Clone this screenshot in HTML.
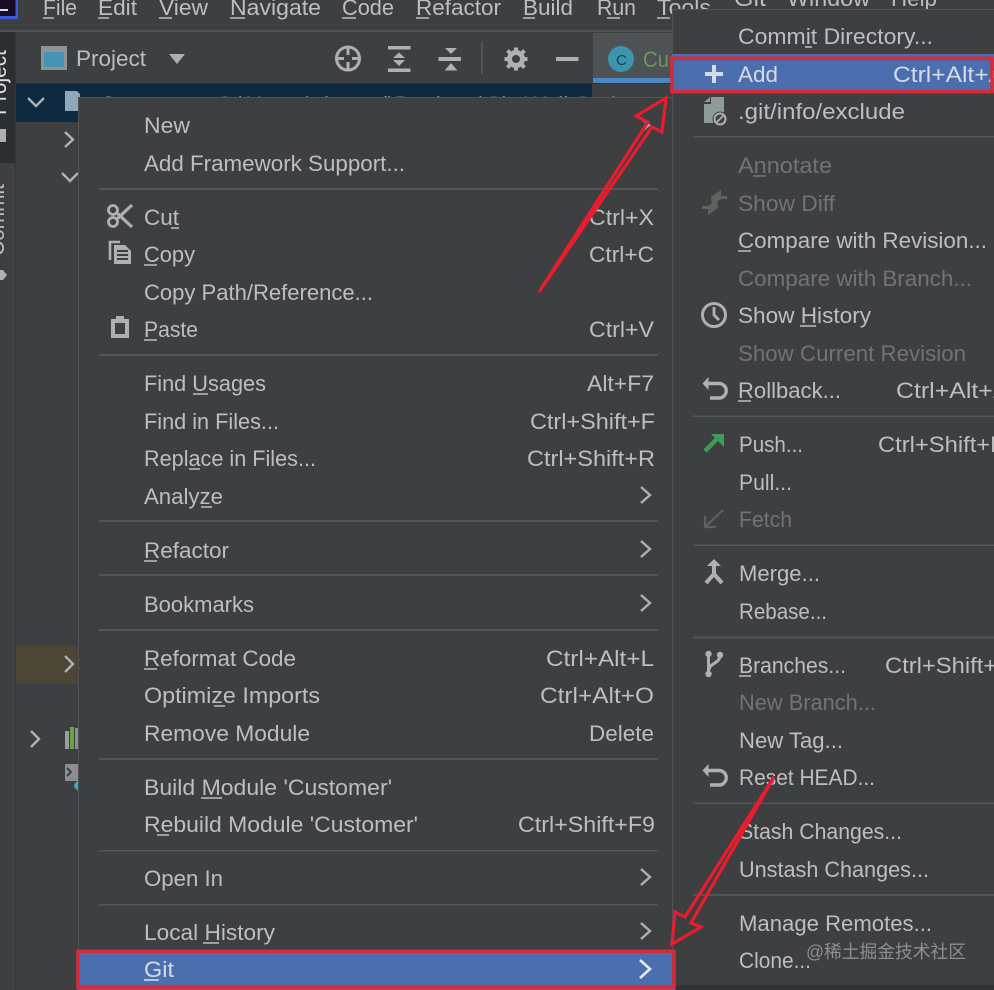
<!DOCTYPE html>
<html><head><meta charset="utf-8"><title>Git menu</title>
<style>
html,body{margin:0;padding:0;background:#3e3f41;width:994px;height:990px;overflow:hidden}
svg{display:block;filter:blur(.3px)}
text{font-family:"Liberation Sans","Noto Sans CJK SC",sans-serif;font-size:22px;fill:#bcbec0}
.d{fill:#717375}
.w{fill:#d6dbe4}
.u{stroke:#bcbec0;stroke-width:1.6}
.sep{fill:#545658}
.ic{fill:#aeb0b2}
.st{fill:none;stroke:#aeb0b2;stroke-width:3}
.ch{fill:none;stroke:#aeb0b2;stroke-width:2.4}
</style></head><body>
<svg width="994" height="990" viewBox="0 0 994 990" xmlns="http://www.w3.org/2000/svg">
<rect width="994" height="990" fill="#3e3f41"/>
<!-- top -->
<rect x="0" y="0" width="18" height="19" fill="#3a5be0"/>
<rect x="0" y="0" width="15.500" height="16" fill="#1a0b26"/>
<rect x="0" y="9" width="8" height="2" fill="#ddd"/>
<rect x="0" y="30" width="994" height="2" fill="#505254"/>
<g>
<text x="43" y="15" textLength="34" lengthAdjust="spacingAndGlyphs">File</text>
<text x="98" y="15" textLength="39" lengthAdjust="spacingAndGlyphs">Edit</text>
<text x="159" y="15" textLength="49" lengthAdjust="spacingAndGlyphs">View</text>
<text x="230" y="15" textLength="91" lengthAdjust="spacingAndGlyphs">Navigate</text>
<text x="342" y="15" textLength="52" lengthAdjust="spacingAndGlyphs">Code</text>
<text x="416" y="15" textLength="85" lengthAdjust="spacingAndGlyphs">Refactor</text>
<text x="523" y="15" textLength="50" lengthAdjust="spacingAndGlyphs">Build</text>
<text x="597" y="15" textLength="39" lengthAdjust="spacingAndGlyphs">Run</text>
<text x="657" y="15" textLength="54" lengthAdjust="spacingAndGlyphs">Tools</text>
<text x="734" y="6" textLength="32" lengthAdjust="spacingAndGlyphs">Git</text>
<text x="787" y="6" textLength="83" lengthAdjust="spacingAndGlyphs">Window</text>
<text x="891" y="6" textLength="46" lengthAdjust="spacingAndGlyphs">Help</text>
<path class="u" d="M43 18h11M98 18h11M159 18h13M230 18h15M342 18h14M416 18h13M523 18h12M607 18h13M657 18h13"/>
</g>
<!-- left strip -->
<rect x="0" y="32" width="16" height="958" fill="#3e3f41"/>
<rect x="0" y="32" width="16" height="131" fill="#2d2e30"/>
<rect x="15" y="32" width="1" height="958" fill="#343537"/>
<text transform="translate(6,115) rotate(-90)" textLength="65" lengthAdjust="spacingAndGlyphs" style="fill:#dfe1e3">Project</text>
<rect x="0" y="129" width="6" height="13" fill="#aeb0b2"/>
<text transform="translate(4,256) rotate(-90)" textLength="72" lengthAdjust="spacingAndGlyphs">Commit</text>
<path class="ic" d="M0 270h3l4 5-4 5H0z"/>
<!-- toolbar -->
<rect x="41" y="46" width="26" height="24" fill="#8c9498"/>
<rect x="44" y="52" width="20" height="15" fill="#4594b5"/>
<text x="76" y="66" textLength="70" lengthAdjust="spacingAndGlyphs">Project</text>
<path class="ic" d="M169 54h16l-8 10z"/>
<circle cx="348" cy="58.500" r="11.500" class="st"/>
<path class="ic" d="M346.500 48h3v7h-3zM346.500 62h3v7h-3zM337 57h7v3h-7zM352 57h7v3h-7z"/>
<rect x="388" y="46" width="22.500" height="3.500" class="ic"/>
<rect x="388" y="68.500" width="22.500" height="3.500" class="ic"/>
<path class="ic" d="M399 52.500l6 5.500h-12zM399 66l6-6h-12z"/>
<rect x="438.500" y="57" width="22.500" height="4" class="ic"/>
<path class="ic" d="M445 48h12l-6 6zM451 63l6.500 7.500h-13z"/>
<rect x="481" y="41" width="2" height="33" fill="#505254"/>
<circle cx="516" cy="59" r="6.500" fill="none" stroke="#aeb0b2" stroke-width="5"/>
<path fill="none" stroke="#aeb0b2" stroke-width="4" d="M516 47.500v4M516 66.500v4M504.500 59h4M523.500 59h4M507.500 50.500l3 3M521.500 64.500l3 3M507.500 67.500l3-3M521.500 53.500l3-3"/>
<rect x="556" y="57" width="22.500" height="4" fill="#aeb0b2"/>
<rect x="593" y="33" width="79" height="45" fill="#4e5254"/>
<rect x="593" y="78" width="79" height="6" fill="#4a88c7"/>
<circle cx="621" cy="59" r="13" fill="#3b95ac"/>
<text x="616" y="65" style="font-size:15px;fill:#1f3f4a">C</text>
<text x="643" y="67" textLength="26" lengthAdjust="spacingAndGlyphs" style="fill:#6a9c50">Cu</text>
<rect x="16" y="83" width="656" height="1" fill="#333"/>
<!-- tree -->
<rect x="16" y="84" width="576" height="38" fill="#0d2a40"/>
<path class="ch" d="M28 98l8 8 8-8"/>
<path d="M65 91h12l3 3v17H65z" fill="#8fa7bb"/>
<text x="100" y="112" style="fill:#a9b7c6">Customer</text>
<text x="216" y="112" style="fill:#7f8b95" textLength="400" lengthAdjust="spacingAndGlyphs">C:\Users\zhourui\Desktop\SkyWalkSpri</text>
<path class="ch" d="M65 132l8 7.500-8 7.500M62 173l8 8 8-8"/>
<rect x="16" y="646" width="62" height="38" fill="#4a4737"/>
<path class="ch" d="M65 656l8 8-8 8M31 731l8 8-8 8"/>
<rect x="65" y="731" width="4" height="18" fill="#9a9c9e"/><rect x="70" y="727" width="4" height="22" fill="#62a83f"/><rect x="75" y="728" width="3" height="21" fill="#8c8e90"/>
<rect x="65" y="764" width="13" height="17" fill="#8c8e90"/><path d="M67 768l4 4-4 4" fill="none" stroke="#333" stroke-width="1.600"/><path d="M78 781a6 6 0 0 0-4 6l4 4z" fill="#3fa8d4"/>
<!-- left menu -->
<rect x="78" y="97" width="594" height="893" fill="#3e3f41"/>
<rect x="78" y="97" width="594" height="1" fill="#505254"/>
<rect x="78" y="97" width="1" height="893" fill="#505254"/>
<g class="sep">
<rect x="99" y="188" width="559" height="2"/><rect x="99" y="354" width="559" height="2"/><rect x="99" y="520" width="559" height="2"/><rect x="99" y="574" width="559" height="2"/><rect x="99" y="629" width="559" height="2"/><rect x="99" y="758" width="559" height="2"/><rect x="99" y="850" width="559" height="1.500"/><rect x="99" y="904" width="559" height="1.500"/>
</g>
<rect x="78" y="950" width="597" height="40" fill="#4b6eaf"/>
<g>
<text x="144" y="133" textLength="46" lengthAdjust="spacingAndGlyphs">New</text>
<text x="144" y="171" textLength="261" lengthAdjust="spacingAndGlyphs">Add Framework Support...</text>
<text x="144" y="225" textLength="35" lengthAdjust="spacingAndGlyphs">Cut</text>
<text x="144" y="262" textLength="51" lengthAdjust="spacingAndGlyphs">Copy</text>
<text x="144" y="300" textLength="229" lengthAdjust="spacingAndGlyphs">Copy Path/Reference...</text>
<text x="144" y="337" textLength="54" lengthAdjust="spacingAndGlyphs">Paste</text>
<text x="144" y="391" textLength="122" lengthAdjust="spacingAndGlyphs">Find Usages</text>
<text x="144" y="429" textLength="135" lengthAdjust="spacingAndGlyphs">Find in Files...</text>
<text x="144" y="466" textLength="172" lengthAdjust="spacingAndGlyphs">Replace in Files...</text>
<text x="144" y="504" textLength="79" lengthAdjust="spacingAndGlyphs">Analyze</text>
<text x="144" y="558" textLength="85" lengthAdjust="spacingAndGlyphs">Refactor</text>
<text x="144" y="612" textLength="110" lengthAdjust="spacingAndGlyphs">Bookmarks</text>
<text x="144" y="666" textLength="152" lengthAdjust="spacingAndGlyphs">Reformat Code</text>
<text x="144" y="703" textLength="176" lengthAdjust="spacingAndGlyphs">Optimize Imports</text>
<text x="144" y="741" textLength="166" lengthAdjust="spacingAndGlyphs">Remove Module</text>
<text x="144" y="795" textLength="248" lengthAdjust="spacingAndGlyphs">Build Module 'Customer'</text>
<text x="144" y="832" textLength="274" lengthAdjust="spacingAndGlyphs">Rebuild Module 'Customer'</text>
<text x="144" y="886" textLength="79" lengthAdjust="spacingAndGlyphs">Open In</text>
<text x="144" y="940" textLength="131" lengthAdjust="spacingAndGlyphs">Local History</text>
<text x="144" y="977" textLength="30" lengthAdjust="spacingAndGlyphs" class="w">Git</text>
<text x="589" y="225" textLength="65" lengthAdjust="spacingAndGlyphs">Ctrl+X</text>
<text x="589" y="262" textLength="65" lengthAdjust="spacingAndGlyphs">Ctrl+C</text>
<text x="589" y="337" textLength="65" lengthAdjust="spacingAndGlyphs">Ctrl+V</text>
<text x="587" y="391" textLength="67" lengthAdjust="spacingAndGlyphs">Alt+F7</text>
<text x="530" y="429" textLength="125" lengthAdjust="spacingAndGlyphs">Ctrl+Shift+F</text>
<text x="527" y="466" textLength="128" lengthAdjust="spacingAndGlyphs">Ctrl+Shift+R</text>
<text x="546" y="666" textLength="108" lengthAdjust="spacingAndGlyphs">Ctrl+Alt+L</text>
<text x="540" y="703" textLength="114" lengthAdjust="spacingAndGlyphs">Ctrl+Alt+O</text>
<text x="589" y="741" textLength="65" lengthAdjust="spacingAndGlyphs">Delete</text>
<text x="518" y="832" textLength="137" lengthAdjust="spacingAndGlyphs">Ctrl+Shift+F9</text>
<path class="u" d="M171 228h8M144 265h13M144 340h13M193 394h15M189 469h11M201 507h11M144 561h13M144 669h13M214 706h11M201 798h21M157 835h12M203 943h16"/>
<path d="M144 980h15" stroke="#d6dbe4" stroke-width="1.600"/>
</g>
<path class="ch" d="M641 118l8 7-8 7M641 487l9 8-9 8M641 541l9 8-9 8M641 595l9 8-9 8M641 869l9 8-9 8M641 923l9 8-9 8"/>
<path d="M640 960l10 9-10 9" fill="none" stroke="#e6e9ef" stroke-width="2.600"/>
<!-- left icons -->
<g fill="none" stroke="#aeb0b2">
<circle cx="113" cy="210" r="4.500" stroke-width="2.800"/><circle cx="113" cy="222" r="4.500" stroke-width="2.800"/>
<path stroke-width="3.200" d="M117 213l15 14M117 219l15-14"/>
<path stroke-width="2.600" d="M110 260v-18h10"/>
</g>
<path class="ic" d="M114 245h11l6 6v13h-17zM117 250v2h11v-2zM117 254v2h11v-2zM117 258v2h11v-2z" fill-rule="evenodd"/>
<path class="ic" fill-rule="evenodd" d="M111 319h5v-3h8v3h5v19h-18zM115 323v11h10v-11z"/>
<!-- right menu -->
<rect x="672" y="9" width="322" height="976" fill="#3e3f41"/>
<rect x="672" y="9" width="322" height="1" fill="#505254"/>
<rect x="672" y="9" width="1" height="976" fill="#505254"/>
<rect x="676" y="985" width="318" height="5" fill="#303234"/>
<g class="sep">
<rect x="693" y="136" width="301" height="1.500"/><rect x="693" y="415.500" width="301" height="1.500"/><rect x="693" y="544.500" width="301" height="1.500"/><rect x="693" y="636.500" width="301" height="2"/><rect x="693" y="802.500" width="301" height="1.500"/><rect x="693" y="894" width="301" height="2"/>
</g>
<rect x="672" y="54" width="322" height="38" fill="#4b6eaf"/>
<g>
<text x="738" y="44" textLength="195" lengthAdjust="spacingAndGlyphs">Commit Directory...</text>
<text x="738" y="82" textLength="40" lengthAdjust="spacingAndGlyphs" class="w">Add</text>
<text x="893" y="82" textLength="112" lengthAdjust="spacingAndGlyphs" class="w">Ctrl+Alt+A</text>
<text x="738" y="119" textLength="167" lengthAdjust="spacingAndGlyphs">.git/info/exclude</text>
<text x="738" y="173" textLength="94" lengthAdjust="spacingAndGlyphs" class="d">Annotate</text>
<text x="738" y="211" textLength="97" lengthAdjust="spacingAndGlyphs" class="d">Show Diff</text>
<text x="738" y="248" textLength="249" lengthAdjust="spacingAndGlyphs">Compare with Revision...</text>
<text x="738" y="286" textLength="234" lengthAdjust="spacingAndGlyphs" class="d">Compare with Branch...</text>
<text x="738" y="323" textLength="133" lengthAdjust="spacingAndGlyphs">Show History</text>
<text x="738" y="361" textLength="228" lengthAdjust="spacingAndGlyphs" class="d">Show Current Revision</text>
<text x="738" y="398" textLength="103" lengthAdjust="spacingAndGlyphs">Rollback...</text>
<text x="896" y="398" textLength="112" lengthAdjust="spacingAndGlyphs">Ctrl+Alt+Z</text>
<text x="739" y="452" textLength="64" lengthAdjust="spacingAndGlyphs">Push...</text>
<text x="878" y="452" textLength="128" lengthAdjust="spacingAndGlyphs">Ctrl+Shift+K</text>
<text x="739" y="490" textLength="53" lengthAdjust="spacingAndGlyphs">Pull...</text>
<text x="739" y="527" textLength="53" lengthAdjust="spacingAndGlyphs" class="d">Fetch</text>
<text x="739" y="581" textLength="81" lengthAdjust="spacingAndGlyphs">Merge...</text>
<text x="739" y="619" textLength="88" lengthAdjust="spacingAndGlyphs">Rebase...</text>
<text x="739" y="673" textLength="107" lengthAdjust="spacingAndGlyphs">Branches...</text>
<text x="885" y="673" textLength="128" lengthAdjust="spacingAndGlyphs">Ctrl+Shift+B</text>
<text x="739" y="710" textLength="137" lengthAdjust="spacingAndGlyphs" class="d">New Branch...</text>
<text x="739" y="748" textLength="104" lengthAdjust="spacingAndGlyphs">New Tag...</text>
<text x="739" y="785" textLength="136" lengthAdjust="spacingAndGlyphs">Reset HEAD...</text>
<text x="739" y="839" textLength="163" lengthAdjust="spacingAndGlyphs">Stash Changes...</text>
<text x="739" y="877" textLength="190" lengthAdjust="spacingAndGlyphs">Unstash Changes...</text>
<text x="739" y="931" textLength="193" lengthAdjust="spacingAndGlyphs">Manage Remotes...</text>
<text x="739" y="968" textLength="72" lengthAdjust="spacingAndGlyphs">Clone...</text>
<path class="u" d="M805 47h7M738 251h13M800 326h16M738 401h13M739 676h12"/>
<path d="M753 176h13" stroke="#717375" stroke-width="1.600"/>
</g>
<!-- right icons -->
<path d="M712 65h4v7h7v4h-7v7h-4v-7h-7v-4h7z" fill="#d6dbe4"/>
<path d="M711 97h13v26h-20v-19h7zM704 102l6-5v5z" fill="#8f9a9c"/>
<circle cx="720" cy="119" r="7.500" fill="#3e3f41"/>
<circle cx="720" cy="119" r="5.500" fill="none" stroke="#aeb0b2" stroke-width="2"/><path d="M716 123l8-8" stroke="#aeb0b2" stroke-width="1.800"/>
<path d="M721 190v6h6v3h-6l-9 6-1-8zM708 215v-6h-6v-3h6l9-6 1 8z" fill="#5f6162"/>
<circle cx="714" cy="315" r="11.500" class="st"/><path d="M714 307v8l5 5" fill="none" stroke="#aeb0b2" stroke-width="2.800"/>
<g id="rb" fill="#aeb0b2"><path d="M708.500 377v13l-6-6.500z"/><path d="M707 383.500h12a6.500 6.500 0 0 1 0 14.500h-9" fill="none" stroke="#aeb0b2" stroke-width="3.400"/></g>
<g fill="#aeb0b2" transform="translate(0,387)"><path d="M708.500 377v13l-6-6.500z"/><path d="M707 383.500h12a6.500 6.500 0 0 1 0 14.500h-9" fill="none" stroke="#aeb0b2" stroke-width="3.400"/></g>
<path d="M705 451l15-15" stroke="#3f9c56" stroke-width="4.500"/><path d="M711 434h13v13z" fill="#3f9c56"/>
<path d="M706 526l17-16M705 516v11h11" stroke="#5e6062" stroke-width="2.200" fill="none"/>
<path d="M714 564v10M714 574l-8 9M714 574l8 9" stroke="#aeb0b2" stroke-width="4" fill="none"/><path d="M714 559l7 7h-14z" fill="#aeb0b2"/>
<circle cx="708.500" cy="654" r="3.200" fill="#aeb0b2"/><circle cx="708.500" cy="674" r="3.200" fill="#aeb0b2"/><circle cx="720" cy="655" r="3.200" fill="#aeb0b2"/>
<path d="M708.500 654v20M720 655c0 9-11 8-11 15" stroke="#aeb0b2" stroke-width="3" fill="none"/>
<!-- watermark -->
<text x="806" y="958" textLength="160" lengthAdjust="spacingAndGlyphs" style="font-size:18px;fill:#8d8f92">@稀土掘金技术社区</text>
<!-- red -->
<g fill="none" stroke-linejoin="miter">
<rect x="672" y="58.300" width="320" height="33.400" stroke-width="3.600" stroke="#d92a3a"/>
<rect x="78" y="951.300" width="596" height="36" stroke-width="3.600" stroke="#d92a3a"/>
<path stroke="#ea1c2e" stroke-width="3.200" d="M539 292L648 122L636 116L666 98L662 132L652 127Z"/>
<path stroke="#ea1c2e" stroke-width="3.200" d="M774 777L685 917L675 912L672 944L701 927L691 923Z"/>
</g>
</svg>
</body></html>
